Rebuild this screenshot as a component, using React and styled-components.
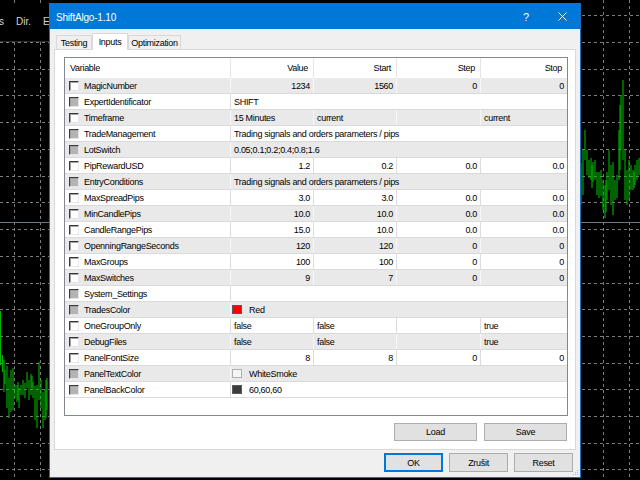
import React from 'react';
import styled, { createGlobalStyle } from 'styled-components';

const GlobalStyle = createGlobalStyle`
    html, body {
        margin: 0;
        padding: 0;
        background: #000;
    }
    body {
        font-family: "Liberation Sans", Arial, sans-serif;
    }
`;

const Screen = styled.div`
    position: relative;
    width: 640px;
    height: 480px;
    overflow: hidden;
    background: #000;
`;

const ChartSvg = styled.svg`
    display: block;
`;

const TerminalHeader = styled.div`
    position: absolute;
    left: -1px;
    top: 4px;
    width: 62px;
    height: 38px;
    box-sizing: border-box;
    padding-top: 13px;
    display: flex;
    align-items: flex-start;
    gap: 12px;
    background: #000;
    border-bottom: 1px solid #2e2e2e;
    color: #d4d4d4;
    font-size: 10px;
    line-height: 10px;
`;

const Window = styled.div`
    position: absolute;
    left: 49px;
    top: 3px;
    width: 532px;
    height: 475px;
    box-sizing: border-box;
    border: 1px solid #1a6fbc;
    background: #f0f0f0;
    display: flex;
    flex-direction: column;
    font-family: "Liberation Sans", Arial, sans-serif;
    font-size: 9px;
    letter-spacing: -0.3px;
    color: #000;
`;

const TitleBar = styled.div`
    height: 25px;
    flex: none;
    display: flex;
    align-items: center;
    padding-left: 6px;
    background: #0078d7;
    color: #fff;
`;

const Title = styled.div`
    flex: 1;
    font-size: 10px;
    letter-spacing: -0.2px;
    padding-top: 1px;
`;

const TitleButton = styled.div`
    width: 36px;
    height: 25px;
    display: flex;
    align-items: center;
    justify-content: center;
    font-size: 11px;
    letter-spacing: 0;
`;

const TabStrip = styled.div`
    height: 20px;
    flex: none;
    display: flex;
    align-items: flex-end;
    padding-left: 6px;
`;

const Tab = styled.div`
    position: relative;
    z-index: 1;
    box-sizing: border-box;
    width: ${p => p.$w}px;
    height: ${p => (p.$active ? 17 : 14)}px;
    margin-bottom: ${p => (p.$active ? -1 : 0)}px;
    border: 1px solid #d9d9d9;
    border-bottom: none;
    background: ${p => (p.$active ? '#fff' : '#f0f0f0')};
    display: flex;
    align-items: center;
    justify-content: center;
    padding-top: ${p => (p.$active ? 0 : 1)}px;
`;

const TabPanel = styled.div`
    margin: 0 4px;
    height: 401px;
    flex: none;
    box-sizing: border-box;
    border: 1px solid #d9d9d9;
    background: #fff;
    padding: 7px 7px 8px 9px;
    display: flex;
    flex-direction: column;
`;

const Table = styled.div`
    height: 359px;
    box-sizing: border-box;
    border: 1px solid #828790;
    background: #fff;
    overflow: hidden;
`;

const columns = '166px 83px 83px 84px 86px';

const HeaderRow = styled.div`
    display: grid;
    grid-template-columns: ${columns};
    height: 20px;
`;

const HeaderCell = styled.div`
    display: flex;
    align-items: center;
    justify-content: ${p => (p.$left ? 'flex-start' : 'flex-end')};
    padding: 0 5px;
    border-right: ${p => (p.$last ? 'none' : '1px solid #e5e5e5')};
`;

const Row = styled.div`
    display: grid;
    grid-template-columns: ${columns};
    height: 16px;
    box-sizing: border-box;
    border-bottom: 1px solid #dadada;
    background: ${p => (p.$shaded ? '#e9e9e9' : '#fff')};
`;

const Cell = styled.div`
    grid-column: span ${p => p.$span || 1};
    display: flex;
    align-items: center;
    justify-content: ${p => (p.$right ? 'flex-end' : 'flex-start')};
    gap: ${p => p.$gap || 0}px;
    padding: 0 3px 0 ${p => (p.$padLeft !== undefined ? p.$padLeft : 3)}px;
    border-right: ${p => (p.$last ? 'none' : `1px solid ${p.$shaded ? '#f7f7f7' : '#dcdcdc'}`)};
    white-space: nowrap;
    overflow: hidden;
`;

const Check = styled.span`
    flex: none;
    width: 10px;
    height: 10px;
    box-sizing: border-box;
    border-top: 1px solid #3a3a3a;
    border-left: 1px solid #3a3a3a;
    border-right: 1px solid #e6e6e6;
    border-bottom: 1px solid #e6e6e6;
    box-shadow: inset 1px 1px 0 #a0a0a0;
    background: ${p => (p.$locked ? '#b4b4b4' : '#fff')};
`;

const Swatch = styled.span`
    flex: none;
    width: 10px;
    height: 9px;
    box-sizing: border-box;
    border: 1px solid ${p => (p.$color === '#f5f5f5' ? '#b0b0b0' : '#5a5a5a')};
    background: ${p => p.$color};
`;

const ButtonRow = styled.div`
    display: flex;
    justify-content: flex-end;
    gap: 7px;
    margin-top: 7px;
    padding-right: 1px;
`;

const Button = styled.button`
    width: ${p => p.$w}px;
    height: ${p => p.$h}px;
    padding: 0;
    box-sizing: border-box;
    background: #e1e1e1;
    border: 1px solid ${p => (p.$default ? '#0078d7' : '#adadad')};
    box-shadow: ${p => (p.$default ? 'inset 0 0 0 1px #0078d7' : 'none')};
    font-family: inherit;
    font-size: 9px;
    letter-spacing: -0.3px;
    color: #000;
`;

const Footer = styled.div`
    display: flex;
    justify-content: flex-end;
    gap: 6px;
    padding: 3px 7px 0 0;
`;

const Grip = styled.svg`
    position: absolute;
    right: 1px;
    bottom: 1px;
`;

const rows = [
    { name: 'MagicNumber', kind: 'nums', values: ['1234', '1560', '0', '0'] },
    { name: 'ExpertIdentificator', locked: true, kind: 'text', text: 'SHIFT' },
    { name: 'Timeframe', kind: 'list', values: ['15 Minutes', 'current', '', 'current'] },
    { name: 'TradeManagement', locked: true, kind: 'text', text: 'Trading signals and orders parameters / pips' },
    { name: 'LotSwitch', locked: true, kind: 'text', text: '0.05;0.1;0.2;0.4;0.8;1.6' },
    { name: 'PipRewardUSD', kind: 'nums', values: ['1.2', '0.2', '0.0', '0.0'] },
    { name: 'EntryConditions', locked: true, kind: 'text', text: 'Trading signals and orders parameters / pips' },
    { name: 'MaxSpreadPips', kind: 'nums', values: ['3.0', '3.0', '0.0', '0.0'] },
    { name: 'MinCandlePips', kind: 'nums', values: ['10.0', '10.0', '0.0', '0.0'] },
    { name: 'CandleRangePips', kind: 'nums', values: ['15.0', '10.0', '0.0', '0.0'] },
    { name: 'OpenningRangeSeconds', kind: 'nums', values: ['120', '120', '0', '0'] },
    { name: 'MaxGroups', kind: 'nums', values: ['100', '100', '0', '0'] },
    { name: 'MaxSwitches', kind: 'nums', values: ['9', '7', '0', '0'] },
    { name: 'System_Settings', locked: true, kind: 'text', text: '' },
    { name: 'TradesColor', locked: true, kind: 'color', color: '#ff0000', text: 'Red' },
    { name: 'OneGroupOnly', kind: 'list', values: ['false', 'false', '', 'true'] },
    { name: 'DebugFiles', kind: 'list', values: ['false', 'false', '', 'true'] },
    { name: 'PanelFontSize', kind: 'nums', values: ['8', '8', '0', '0'] },
    { name: 'PanelTextColor', locked: true, kind: 'color', color: '#f5f5f5', text: 'WhiteSmoke' },
    { name: 'PanelBackColor', locked: true, kind: 'color', color: '#3c3c3c', text: '60,60,60' },
];

// price bars [x, high, low]
const leftBars = [
    [0.5, 311, 365], [1.5, 320, 362], [2.5, 355, 372], [4, 360, 392], [5, 370, 384], [6, 362, 395],
    [7, 366, 408], [8, 372, 400], [9, 378, 418], [10, 360, 402], [11, 370, 412], [12, 365, 395],
    [13, 368, 410], [14, 380, 405], [15, 385, 398], [16, 378, 396], [17, 385, 402], [18, 382, 400],
    [19, 388, 408], [20, 380, 398], [21, 385, 395], [22, 386, 405], [23, 380, 395], [24, 376, 396],
    [25, 383, 398], [26, 378, 392], [27, 372, 388], [28, 375, 392], [29, 380, 400], [30, 378, 394],
    [31, 374, 395], [32, 376, 388], [33, 382, 398], [34, 378, 410], [35, 386, 420], [36, 390, 430],
    [37, 385, 428], [38, 372, 410], [39, 362, 400], [40, 365, 395], [41, 380, 408], [42, 388, 426],
    [43, 392, 428], [44, 385, 418], [45, 390, 420], [46, 380, 418], [47, 378, 410], [48, 382, 406],
];

const rightBars = [
    [581, 163, 205], [582, 170, 210], [583, 150, 195], [584, 135, 170], [585, 130, 160], [586, 140, 168],
    [587, 150, 175], [588, 155, 172], [589, 160, 178], [590, 162, 185], [591, 158, 180], [592, 165, 188],
    [593, 162, 182], [594, 168, 186], [595, 160, 180], [596, 165, 190], [597, 172, 195], [598, 168, 188],
    [599, 172, 198], [600, 175, 192], [601, 170, 196], [602, 178, 200], [603, 180, 210], [604, 176, 205],
    [605, 185, 218], [606, 180, 212], [607, 172, 200], [608, 176, 205], [609, 150, 190], [610, 155, 198],
    [611, 165, 205], [612, 170, 210], [613, 162, 215], [614, 175, 212], [615, 180, 200], [616, 185, 205],
    [617, 175, 198], [618, 160, 195], [619, 130, 180], [620, 105, 170], [621, 95, 150], [622, 62, 130],
    [623, 80, 160], [624, 100, 190], [625, 150, 200], [626, 165, 215], [627, 170, 205], [628, 175, 212],
    [629, 160, 200], [630, 170, 195], [631, 165, 190], [632, 160, 185], [633, 170, 190], [634, 172, 188],
    [635, 165, 185], [636, 168, 190], [637, 160, 180], [638, 162, 178], [639, 158, 175],
];

const gridX = [14, 40, 603, 629];
const gridY = [15, 42, 69, 95, 122, 149, 176, 202, 229, 256, 283, 309, 336, 363, 389, 416, 443, 469];

const Chart = () => (
    <ChartSvg width="640" height="480" viewBox="0 0 640 480">
        {gridX.map(x => (
            <line key={`v${x}`} x1={x + 0.5} y1="0" x2={x + 0.5} y2="480" stroke="#7c7c7c" strokeDasharray="3 3" />
        ))}
        {gridY.map(y => (
            <line key={`h${y}`} x1="0" y1={y + 0.5} x2="640" y2={y + 0.5} stroke="#7c7c7c" strokeDasharray="3 3" />
        ))}
        <line x1="0" y1="222.5" x2="640" y2="222.5" stroke="#6e7780" />
        {[...leftBars, ...rightBars].filter((_, i) => i % 2 === 0 || i % 7 === 3).map(([x, hi, lo]) => (
            <line key={`b${x}`} x1={x} y1={hi} x2={x} y2={lo} stroke="#00b400" strokeWidth="1.1" />
        ))}
    </ChartSvg>
);

const ParamRow = ({ row, index }) => {
    const shaded = index % 2 === 0;
    return (
        <Row $shaded={shaded}>
            <Cell $shaded={shaded} $padLeft={4} $gap={5}>
                <Check $locked={row.locked} />
                <span>{row.name}</span>
            </Cell>
            {row.kind === 'text' && (
                <Cell $shaded={shaded} $span={4} $last>{row.text}</Cell>
            )}
            {row.kind === 'color' && (
                <Cell $shaded={shaded} $span={4} $last $padLeft={1} $gap={7}>
                    <Swatch $color={row.color} />
                    <span>{row.text}</span>
                </Cell>
            )}
            {(row.kind === 'nums' || row.kind === 'list') && row.values.map((v, i) => (
                <Cell key={i} $shaded={shaded} $right={row.kind === 'nums'} $last={i === 3}>{v}</Cell>
            ))}
        </Row>
    );
};

const App = () => (
    <Screen>
        <GlobalStyle />
        <Chart />
        <TerminalHeader>
            <span>s</span>
            <span>Dir.</span>
            <span>E</span>
        </TerminalHeader>
        <Window>
            <TitleBar>
                <Title>ShiftAlgo-1.10</Title>
                <TitleButton>?</TitleButton>
                <TitleButton>
                    <svg width="9" height="9" viewBox="0 0 9 9">
                        <path d="M0.5 0.5 L8.5 8.5 M8.5 0.5 L0.5 8.5" stroke="#fff" strokeWidth="1" />
                    </svg>
                </TitleButton>
            </TitleBar>
            <TabStrip>
                <Tab $w={36}>Testing</Tab>
                <Tab $w={36} $active>Inputs</Tab>
                <Tab $w={53}>Optimization</Tab>
            </TabStrip>
            <TabPanel>
                <Table>
                    <HeaderRow>
                        <HeaderCell $left>Variable</HeaderCell>
                        <HeaderCell>Value</HeaderCell>
                        <HeaderCell>Start</HeaderCell>
                        <HeaderCell>Step</HeaderCell>
                        <HeaderCell $last>Stop</HeaderCell>
                    </HeaderRow>
                    {rows.map((row, i) => (
                        <ParamRow key={row.name} row={row} index={i} />
                    ))}
                </Table>
                <ButtonRow>
                    <Button $w={83} $h={18}>Load</Button>
                    <Button $w={83} $h={18}>Save</Button>
                </ButtonRow>
            </TabPanel>
            <Footer>
                <Button $w={59} $h={19} $default>OK</Button>
                <Button $w={59} $h={19}>Zrušit</Button>
                <Button $w={59} $h={19}>Reset</Button>
            </Footer>
            <Grip width="7" height="7" viewBox="0 0 7 7">
                {[[5, 1], [5, 3], [3, 3], [5, 5], [3, 5], [1, 5]].map(([x, y]) => (
                    <rect key={`${x}${y}`} x={x} y={y} width="1" height="1" fill="#b8b8b8" />
                ))}
            </Grip>
        </Window>
    </Screen>
);

export default App;
